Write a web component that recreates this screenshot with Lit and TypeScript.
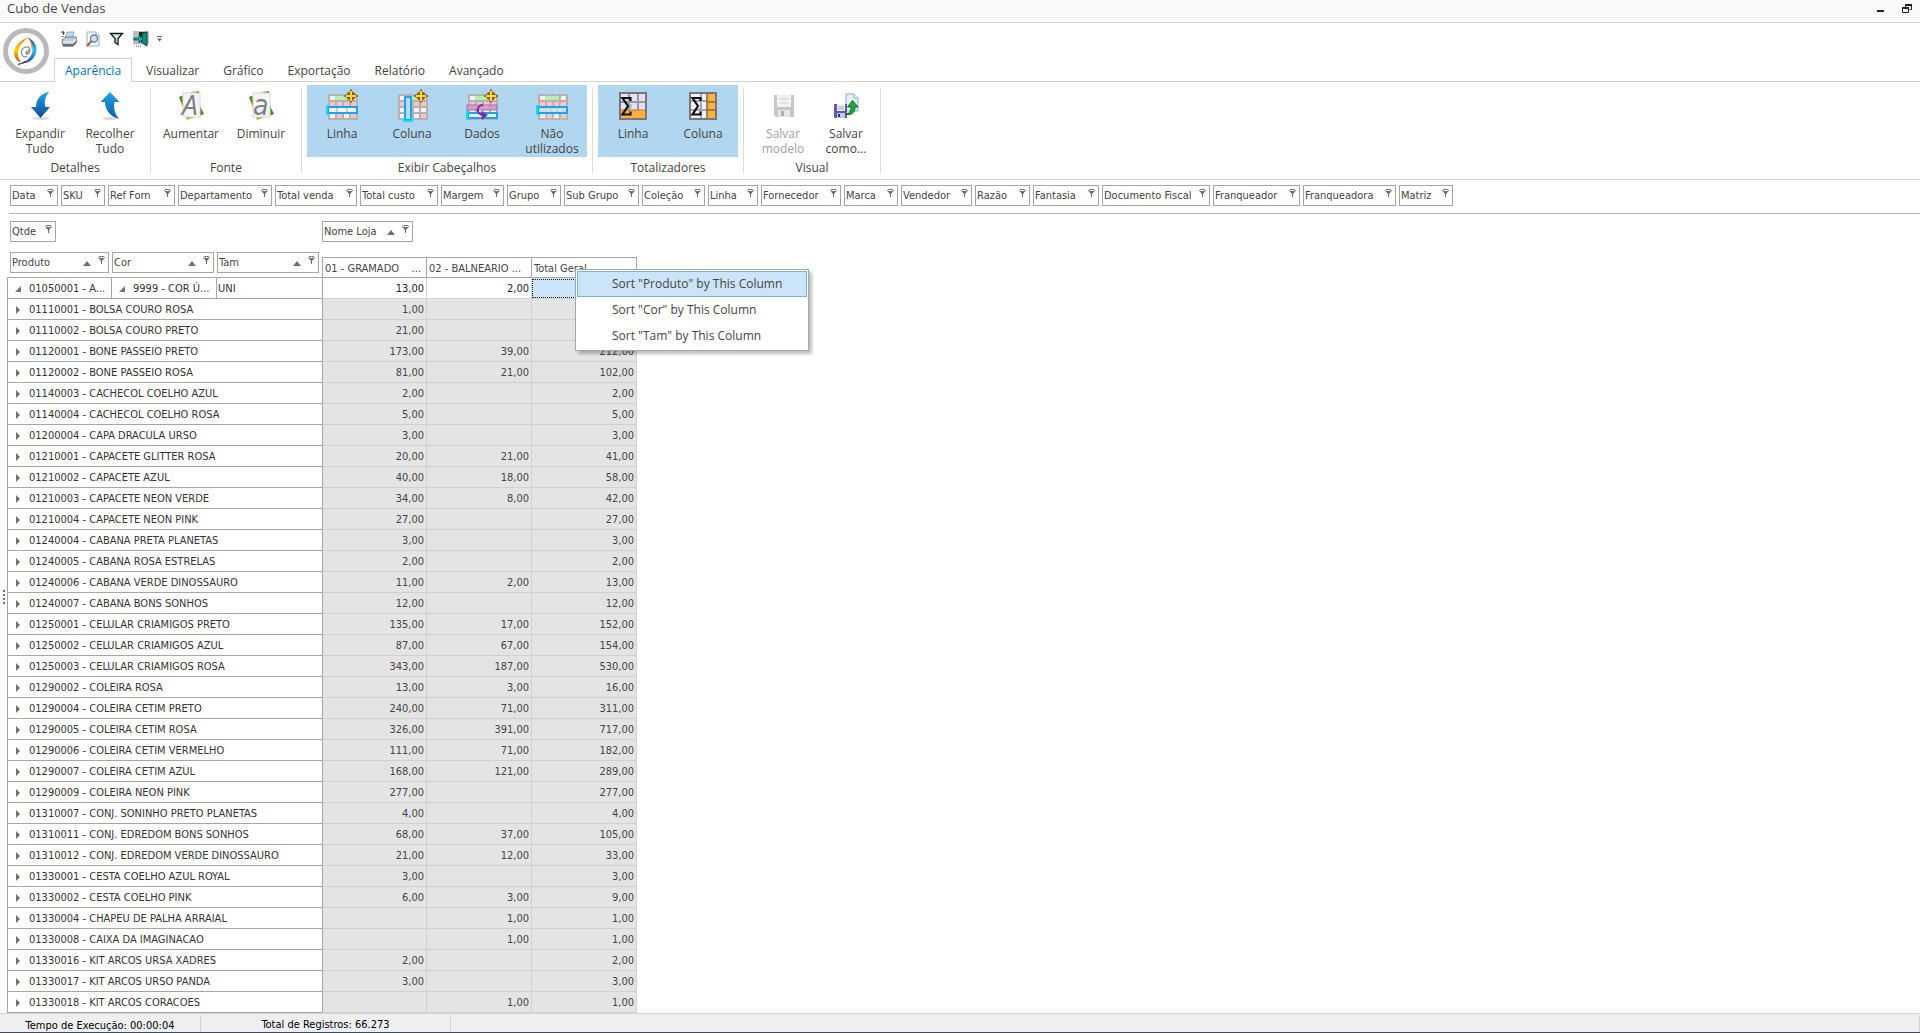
import { LitElement, html, svg, css, nothing, TemplateResult } from "lit";
import { customElement, property } from "lit/decorators.js";
import { classMap } from "lit/directives/class-map.js";

/* ---------- Icons ---------- */

const star = svg`
  <path d="M25 0l2 4 4 2-4 2-2 4-2-4-4-2 4-2z" fill="#ffe24a" stroke="#8a5a10" stroke-width="1.4"/>
  <path d="M21.500 2.500l7 7M28.500 2.500l-7 7" stroke="#8a5a10" stroke-width="1.6"/>
  <path d="M25 1v10M20 6h10" stroke="#ffd83a" stroke-width="2"/>`;

const sheetGrid = (dim = false) => {
  const cells: TemplateResult[] = [];
  const fills = [
    ["#f4f4f4", "#b9ecae", "#b9ecae", "#f4f4f4"],
    ["#ffc2c2", "#ffc2c2", "#ffc2c2", "#ffc2c2"],
    ["#f4f4f4", "#f4f4f4", "#f4f4f4", "#f4f4f4"],
    ["#f4f4f4", "#ffc2c2", "#f4f4f4", "#ffc2c2"],
  ];
  fills.forEach((row, r) =>
    row.forEach((fill, c) => {
      cells.push(svg`<rect x=${4 + c * 7} y=${6 + r * 6} width="5" height="4" fill=${fill}/>` as unknown as TemplateResult);
    })
  );
  return svg`
    <rect x="2" y="4" width="30" height="26" fill=${dim ? "#b9a8b4" : "#b3b3b3"}/>
    ${cells}
    <rect x="9" y="6" width="14" height="4" fill="#b9ecae"/>
    ${dim
      ? svg`<path d="M3 5h28M5 11h26M3 16h28M4 25h28M3 29h28" stroke="#b0d6f0" stroke-width="1" stroke-dasharray="1 2"/>
          <path d="M5 8h26M4 14h28M5 28h26" stroke="#f7f0a8" stroke-width="1" stroke-dasharray="1 3"/>
          <path d="M4 9h26M5 26h26M24 3h3" stroke="#c6e8a0" stroke-width="1" stroke-dasharray="2 2"/>`
      : nothing}`;
};

const sigma = svg`<path d="M13.500 11V8H5.500L11 16 5.500 24.500H13.500V21.500" fill="none" stroke="#111" stroke-width="2.200"/>
  <path d="M13 14l1.500 2-2 3" fill="none" stroke="#5ab4f0" stroke-width="1"/>`;

const icons: Record<string, unknown> = {
  expand: svg`
    <defs><linearGradient id="g" x1="0" y1="0" x2="0" y2="1"><stop offset="0" stop-color="#22a4ee"/><stop offset="1" stop-color="#0a4c92"/></linearGradient></defs>
    <ellipse cx="17" cy="28.500" rx="9" ry="1.500" fill="#d9d9d9"/>
    <path d="M25.500 2C17 3 12 9 12 17H7l9.500 11L26 17h-4.500C20 12 21 6 25.500 2z" fill="url(#g)"/>`,
  collapse: svg`
    <defs><linearGradient id="g" x1="0" y1="0" x2="0" y2="1"><stop offset="0" stop-color="#22a4ee"/><stop offset="1" stop-color="#0a5ca6"/></linearGradient></defs>
    <ellipse cx="17" cy="28.500" rx="9" ry="1.500" fill="#d9d9d9"/>
    <path d="M16 2L6.500 12H11c0 8 6 15.500 14 16.500-4.500-4.500-5.500-10.500-4.500-16.500h5z" fill="url(#g)"/>`,
  bigger: svg`
    <path d="M4 7L20 1 28 24 12 30z" fill="#8cc63c"/><path d="M4 7l3-1 3 14zM24 1l1 8-5-7z" fill="#4c8a1c"/><path d="M25 16l4 8-5 2z" fill="#4c8a1c"/>
    <rect x="8" y="3" width="17" height="24" fill="#f5f5f5" stroke="#d8d8d8"/>
    <text x="7" y="25" font-family="Open Sans, sans-serif" font-size="28" font-style="italic" fill="#808080">A</text>`,
  smaller: svg`
    <path d="M4 7L20 1 28 24 12 30z" fill="#8cc63c"/><path d="M4 7l3-1 3 14zM24 1l1 8-5-7z" fill="#4c8a1c"/><path d="M25 16l4 8-5 2z" fill="#4c8a1c"/>
    <rect x="8" y="3" width="17" height="24" fill="#f5f5f5" stroke="#d8d8d8"/>
    <text x="8" y="25" font-family="DejaVu Sans Condensed, sans-serif" font-size="28" font-style="italic" fill="#808080">a</text>`,
  row: svg`${sheetGrid()}
    <rect x="2" y="17" width="29" height="6" fill="#f2f8fc" stroke="#1ba1f5" stroke-width="2"/>
    <path d="M11 18v4M21 18v4" stroke="#c8d0d8" stroke-width="2"/>
    <path d="M3 16H1v8h2" fill="none" stroke="#10dcff" stroke-width="2"/>${star}`,
  column: svg`${sheetGrid()}
    <rect x="9" y="7" width="6" height="23" fill="#b8dcf4" stroke="#1ba1f5" stroke-width="2"/>
    <path d="M8 28v3h8v-3" fill="none" stroke="#10dcff" stroke-width="2"/>${star}`,
  data: svg`${sheetGrid()}
    <rect x="1" y="15" width="30" height="5" fill="#c9a0cf" stroke="#b06ab8"/>
    <rect x="2" y="23" width="29" height="5" fill="#f2f8fc" stroke="#1ba1f5" stroke-width="2"/>
    <path d="M3 22H1v7h2" fill="none" stroke="#10dcff" stroke-width="2"/>
    <path d="M17 15c-7 0-7 10 0 10" fill="none" stroke="#7e2aa4" stroke-width="2"/>
    <path d="M15 21l7 4-6 5z" fill="#7e2aa4"/>${star}`,
  unused: svg`${sheetGrid(true)}
    <rect x="2" y="17" width="29" height="6" fill="#c4dcec" stroke="#1ba1f5" stroke-width="2"/>
    <path d="M5 20h24" stroke="#f7f4c8" stroke-width="2" stroke-dasharray="2 4"/>
    <path d="M3 16H1v8h2" fill="none" stroke="#10dcff" stroke-width="2"/>`,
  totalRow: svg`
    <rect x="3" y="3" width="26" height="26" fill="#e2e0fa" stroke="#777" stroke-width="2"/>
    <path d="M12 4v16M21 4v16M4 12h24" stroke="#9a9a9a" stroke-width="2"/>
    <rect x="4" y="20" width="24" height="8" fill="#ffae3c"/><path d="M4 20h24" stroke="#c07a20"/>${sigma}`,
  totalColumn: svg`
    <rect x="3" y="3" width="26" height="26" fill="#eef2fa" stroke="#777" stroke-width="2"/>
    <path d="M14 4v24M4 11h16M4 20h16" stroke="#a8a8a8" stroke-width="2"/>
    <rect x="20" y="4" width="8" height="24" fill="#ffb040"/><path d="M20 4v24M20 12h8M20 20h8" stroke="#8a6a3a" stroke-width="1.500"/>${sigma}`,
  save: svg`
    <path d="M7 5h20v22H9l-2-2z" fill="#c6c6c6"/><rect x="10" y="5" width="14" height="12" fill="#f2f2f2"/>
    <path d="M12 9h10M12 13h10" stroke="#cfcfcf"/><rect x="11" y="20" width="12" height="7" fill="#e6e6e6"/><rect x="14" y="21" width="3" height="5" fill="#b0b0b0"/>`,
  saveAs: svg`
    <path d="M16 4h8l4 4v13H16z" fill="#eaf3fd" stroke="#7fa8dc"/><path d="M24 4v4h4" fill="#fff" stroke="#7fa8dc"/>
    <path d="M4 14h13v14H5l-1-1z" fill="#5a58b8"/><rect x="7" y="14" width="8" height="7" fill="#eee"/><path d="M8 17h6M8 19h6" stroke="#aaa"/>
    <rect x="7" y="23" width="8" height="5" fill="#c8c8dc"/><rect x="8" y="24" width="2" height="3" fill="#333478"/>
    <path d="M15 24c5 0 6-3 6-7h-3.500l5-6.500 5.500 6.500h-3c0 6-4 9-10 7z" fill="#22a83a" stroke="#0e6a1e"/>`,
  print: svg`
    <path d="M6 1h7l-2 7H4z" fill="#b8dcfa" stroke="#7a9cc0" stroke-width=".8"/>
    <path d="M1 9l4-3h10l1 5-4 4H2z" fill="#c9ccd2" stroke="#777d88"/><path d="M2 11h11l2-3" stroke="#f4f4f4" fill="none"/>
    <path d="M2 13h10l3-3v3l-3 2.500H2z" fill="#6d727c"/>
    <path d="M0.500 1.500q1.500-1.500 2.500 0 0 1-1.200 2M1.800 5v1" stroke="#222" stroke-width="1.200" fill="none"/>`,
  preview: svg`
    <path d="M2 1h9l3 3v11H2z" fill="#f5faff" stroke="#8cb0dc"/><path d="M11 1v3h3" fill="#fff" stroke="#8cb0dc"/>
    <circle cx="9" cy="7.500" r="3.500" fill="#c8e4f8" stroke="#6a7f98" stroke-width="1.300"/><path d="M6.500 10L2 15" stroke="#a86430" stroke-width="2"/>`,
  funnel: svg`<path d="M1.500 2.500h12l-4.500 5v6l-3-2v-4z" fill="#bff0ec" stroke="#111" stroke-width="1.300"/><path d="M8 7.500v4" stroke="#2aa8a0"/>`,
  exit: svg`
    <rect width="16" height="13" fill="#bdbdbd"/><path d="M6 1h7v10H6z" fill="#222"/><path d="M9 2l5-1v14l-5-3z" fill="#0d8a86" stroke="#032" stroke-width=".8"/>
    <path d="M1 7h5V4l4 4-4 4V9H1z" fill="#12b4a8" stroke="#044" stroke-width=".7"/><path d="M1 14h7M3 15.500h6M12 15h4" stroke="#999" stroke-dasharray="1 1"/>`,
};

const funnel = html`<svg class="funnel" viewBox="0 0 7 8" aria-hidden="true"><ellipse cx="3.500" cy="1.500" rx="3" ry="1.100" fill="#fff" stroke="#666"/><path d="M.5 2L3 5v3h1V5l2.500-3-3 1z" fill="#666"/></svg>`;
const sortUp = html`<svg class="sort" viewBox="0 0 8 5" aria-hidden="true"><path d="M4 0l4 5H0z" fill="#707070"/></svg>`;

const sharedText = css`
  button {
    font: inherit;
    color: inherit;
    border: 0;
    background: none;
    padding: 0;
    margin: 0;
  }
  svg {
    display: block;
    overflow: visible;
  }
`;

/* ---------- Ribbon button ---------- */

@customElement("ribbon-button")
class RibbonButton extends LitElement {
  @property() label = "";
  @property() icon = "";
  @property({ type: Boolean }) disabled = false;
  @property({ type: Boolean, reflect: true }) pressed = false;

  static styles = [
    sharedText,
    css`
      :host {
        display: flex;
        width: 70px;
      }
      :host([pressed]) {
        background: #b0d6f0;
      }
      button {
        flex: 1;
        display: flex;
        flex-direction: column;
        align-items: center;
        padding-top: 5px;
        line-height: 15px;
        white-space: pre-line;
        text-align: center;
      }
      button:disabled {
        color: #a0a0a0;
      }
      svg {
        width: 32px;
        height: 32px;
        margin-bottom: 4px;
      }
    `,
  ];

  render() {
    return html`<button type="button" ?disabled=${this.disabled} aria-pressed=${this.pressed}><svg viewBox="0 0 32 32" aria-hidden="true">${icons[this.icon]}</svg><span>${this.label}</span></button>`;
  }
}

/* ---------- Pivot field chip ---------- */

@customElement("field-chip")
class FieldChip extends LitElement {
  @property() label = "";
  @property({ type: Number }) width = 60;
  @property({ type: Boolean }) sorted = false;

  static styles = [
    sharedText,
    css`
      :host {
        display: block;
      }
      button {
        box-sizing: border-box;
        display: flex;
        align-items: flex-start;
        height: 21px;
        padding: 0 3px 0 1px;
        border: 1px solid #a6a6a6;
        background: #fff;
        line-height: 19px;
        text-align: left;
      }
      .name {
        flex: 1;
        white-space: nowrap;
      }
      .funnel {
        width: 7px;
        height: 8px;
        margin-top: 3px;
      }
      .sort {
        width: 8px;
        height: 5px;
        margin: 8px 7px 0 0;
      }
    `,
  ];

  render() {
    return html`<button type="button" style="width:${this.width}px"><span class="name">${this.label}</span>${this.sorted ? sortUp : nothing}${funnel}</button>`;
  }
}

/* ---------- Data ---------- */

interface RibbonItem {
  label: string;
  icon: string;
  pressed?: boolean;
  disabled?: boolean;
}

const groups: { title: string; compact?: boolean; items: RibbonItem[] }[] = [
  { title: "Detalhes", items: [{ label: "Expandir\nTudo", icon: "expand" }, { label: "Recolher\nTudo", icon: "collapse" }] },
  { title: "Fonte", items: [{ label: "Aumentar", icon: "bigger" }, { label: "Diminuir", icon: "smaller" }] },
  {
    title: "Exibir Cabeçalhos",
    items: [
      { label: "Linha", icon: "row", pressed: true },
      { label: "Coluna", icon: "column", pressed: true },
      { label: "Dados", icon: "data", pressed: true },
      { label: "Não\nutilizados", icon: "unused", pressed: true },
    ],
  },
  {
    title: "Totalizadores",
    items: [
      { label: "Linha", icon: "totalRow", pressed: true },
      { label: "Coluna", icon: "totalColumn", pressed: true },
    ],
  },
  {
    title: "Visual",
    compact: true,
    items: [
      { label: "Salvar\nmodelo", icon: "save", disabled: true },
      { label: "Salvar\ncomo...", icon: "saveAs" },
    ],
  },
];

const tabs = ["Aparência", "Visualizar", "Gráfico", "Exportação", "Relatório", "Avançado"];

const filters: [string, number][] = [
  ["Data", 48], ["SKU", 44], ["Ref Forn", 67], ["Departamento", 94], ["Total venda", 82], ["Total custo", 78],
  ["Margem", 63], ["Grupo", 54], ["Sub Grupo", 75], ["Coleção", 63], ["Linha", 50], ["Fornecedor", 80],
  ["Marca", 54], ["Vendedor", 71], ["Razão", 55], ["Fantasia", 66], ["Documento Fiscal", 108], ["Franqueador", 87],
  ["Franqueadora", 93], ["Matriz", 54],
];

const rows: [string, string, string, string][] = [
  ["01110001 - BOLSA COURO ROSA", "1,00", "", "1,00"],
  ["01110002 - BOLSA COURO PRETO", "21,00", "", "21,00"],
  ["01120001 - BONE PASSEIO PRETO", "173,00", "39,00", "212,00"],
  ["01120002 - BONE PASSEIO ROSA", "81,00", "21,00", "102,00"],
  ["01140003 - CACHECOL COELHO AZUL", "2,00", "", "2,00"],
  ["01140004 - CACHECOL COELHO ROSA", "5,00", "", "5,00"],
  ["01200004 - CAPA DRACULA URSO", "3,00", "", "3,00"],
  ["01210001 - CAPACETE GLITTER ROSA", "20,00", "21,00", "41,00"],
  ["01210002 - CAPACETE AZUL", "40,00", "18,00", "58,00"],
  ["01210003 - CAPACETE NEON VERDE", "34,00", "8,00", "42,00"],
  ["01210004 - CAPACETE NEON PINK", "27,00", "", "27,00"],
  ["01240004 - CABANA PRETA PLANETAS", "3,00", "", "3,00"],
  ["01240005 - CABANA ROSA ESTRELAS", "2,00", "", "2,00"],
  ["01240006 - CABANA VERDE DINOSSAURO", "11,00", "2,00", "13,00"],
  ["01240007 - CABANA BONS SONHOS", "12,00", "", "12,00"],
  ["01250001 - CELULAR CRIAMIGOS PRETO", "135,00", "17,00", "152,00"],
  ["01250002 - CELULAR CRIAMIGOS AZUL", "87,00", "67,00", "154,00"],
  ["01250003 - CELULAR CRIAMIGOS ROSA", "343,00", "187,00", "530,00"],
  ["01290002 - COLEIRA ROSA", "13,00", "3,00", "16,00"],
  ["01290004 - COLEIRA CETIM PRETO", "240,00", "71,00", "311,00"],
  ["01290005 - COLEIRA CETIM ROSA", "326,00", "391,00", "717,00"],
  ["01290006 - COLEIRA CETIM VERMELHO", "111,00", "71,00", "182,00"],
  ["01290007 - COLEIRA CETIM AZUL", "168,00", "121,00", "289,00"],
  ["01290009 - COLEIRA NEON PINK", "277,00", "", "277,00"],
  ["01310007 - CONJ. SONINHO PRETO PLANETAS", "4,00", "", "4,00"],
  ["01310011 - CONJ. EDREDOM BONS SONHOS", "68,00", "37,00", "105,00"],
  ["01310012 - CONJ. EDREDOM VERDE DINOSSAURO", "21,00", "12,00", "33,00"],
  ["01330001 - CESTA COELHO AZUL ROYAL", "3,00", "", "3,00"],
  ["01330002 - CESTA COELHO PINK", "6,00", "3,00", "9,00"],
  ["01330004 - CHAPEU DE PALHA ARRAIAL", "", "1,00", "1,00"],
  ["01330008 - CAIXA DA IMAGINACAO", "", "1,00", "1,00"],
  ["01330016 - KIT ARCOS URSA XADRES", "2,00", "", "2,00"],
  ["01330017 - KIT ARCOS URSO PANDA", "3,00", "", "3,00"],
  ["01330018 - KIT ARCOS CORACOES", "", "1,00", "1,00"],
];

const sortOptions = ["Produto", "Cor", "Tam"];

const opened = html`<button type="button" class="toggle" aria-label="Recolher"><svg width="6" height="6" viewBox="0 0 6 6"><path d="M6 0v6H0z" fill="#707070"/></svg></button>`;
const closed = html`<button type="button" class="toggle" aria-label="Expandir"><svg width="6" height="8" viewBox="0 0 6 8"><path d="M1 0l4 4-4 4z" fill="#707070"/></svg></button>`;

/* ---------- Application ---------- */

@customElement("app-root")
class AppRoot extends LitElement {
  static styles = [
    sharedText,
    css`
      :host {
        display: flex;
        flex-direction: column;
        min-height: 100vh;
        box-sizing: border-box;
        border-bottom: 1px solid #3b4a6b;
        background: #fff;
        color: #444;
        font: 12px/15px "Open Sans", "Noto Sans", sans-serif;
      }

      .titlebar {
        display: flex;
        justify-content: space-between;
        height: 22px;
        padding: 0 8px 0 7px;
        border-bottom: 1px solid #d2d2d2;
        background: #fafafa;
        font-size: 13px;
        line-height: 17px;
      }
      .window-buttons {
        display: flex;
        gap: 18px;
        padding-top: 4px;
        align-items: flex-start;
      }

      .header {
        display: grid;
        grid-template-columns: 54px 1fr;
        height: 58px;
        border-bottom: 1px solid #d2d2d2;
      }
      .logo {
        grid-row: span 2;
        width: 46px;
        height: 46px;
        margin: 5px 0 0 3px;
      }
      .quick {
        display: flex;
        align-items: center;
        height: 31px;
        padding-left: 7px;
        gap: 8px;
      }
      .quick svg {
        width: 16px;
        height: 16px;
      }
      .quick .more svg {
        width: 5px;
        height: 6px;
      }
      .tabs {
        display: flex;
        height: 24px;
        margin-top: 4px;
      }
      .tab {
        box-sizing: border-box;
        height: 24px;
        padding: 0 11px;
        border: 1px solid transparent;
        border-bottom: 0;
        line-height: 24px;
      }
      .tab.active {
        border-color: #d2d2d2;
        background: #fff;
        color: #0072c6;
        padding: 0 10px;
        margin-right: 2px;
      }

      .ribbon {
        display: flex;
        height: 97px;
        border-bottom: 1px solid #d2d2d2;
      }
      .group {
        display: flex;
        flex-direction: column;
        align-items: center;
        padding: 3px 6px 0 5px;
        position: relative;
      }
      .group::after {
        content: "";
        position: absolute;
        top: 6px;
        right: 0;
        height: 85px;
        border-right: 1px solid #dcdcdc;
      }
      .buttons {
        display: flex;
        height: 72px;
      }
      .compact ribbon-button {
        width: 68px;
      }
      .compact ribbon-button:last-child {
        width: 58px;
      }
      .group-title {
        line-height: 22px;
      }

      .workspace {
        flex: 1;
        display: flex;
        font: 11px/19px "DejaVu Sans Condensed", "DejaVu Sans", sans-serif;
      }
      .splitter {
        width: 7px;
        display: flex;
        flex-direction: column;
        justify-content: center;
        align-items: center;
        gap: 2px;
      }
      .splitter i {
        width: 2px;
        height: 2px;
        background: #707070;
      }
      .pivot {
        flex: 1;
      }
      .filters {
        display: flex;
        gap: 3px;
        margin-left: 2px;
        padding: 5px 0 7px 1px;
        border-bottom: 1px solid #b4b4b4;
      }
      .grid {
        position: relative;
      }

      table {
        border-collapse: separate;
        border-spacing: 0;
        table-layout: fixed;
        width: 630px;
      }
      th,
      td {
        padding: 0;
        font-weight: normal;
        text-align: left;
        white-space: nowrap;
      }
      .areas th {
        height: 34px;
        vertical-align: top;
      }
      .areas field-chip {
        margin-top: 7px;
      }
      .areas .data-area {
        padding-left: 3px;
      }
      .fields th {
        height: 30px;
        vertical-align: bottom;
      }
      .fields .row-fields {
        border-bottom: 1px solid #a6a6a6;
        height: 29px;
      }
      .chips {
        display: flex;
        gap: 3px;
        padding: 4px 0 4px 3px;
      }
      .caption {
        height: 19px;
        padding-left: 2px;
        border: 1px solid #a6a6a6;
        border-right: 0;
        line-height: 21px;
        white-space: pre;
      }
      th:last-child .caption {
        border-right: 1px solid #a6a6a6;
      }

      tbody th {
        height: 20px;
        border-left: 1px solid #a6a6a6;
        border-bottom: 1px solid #a6a6a6;
        color: #333;
      }
      .cell {
        box-sizing: border-box;
        display: flex;
        align-items: center;
        height: 20px;
        padding-top: 1px;
      }
      .toggle {
        width: 21px;
        padding-left: 7px;
      }
      .plain {
        padding-left: 1px;
      }
      td {
        height: 18px;
        padding: 2px 2px 0 0;
        line-height: 18px;
        text-align: right;
        background: #e4e4e4;
        border-left: 1px solid #d0d0d0;
        border-bottom: 1px solid #d0d0d0;
        color: #444;
      }
      td:last-child {
        border-right: 1px solid #d0d0d0;
      }
      th + td {
        border-left-color: #a6a6a6;
      }
      .leaf td {
        background: #fff;
        color: #222;
      }
      .leaf td.selected {
        background: #cce4f7;
        outline: 1px dotted #222;
        outline-offset: -2px;
      }

      .menu {
        position: absolute;
        top: 55px;
        left: 568px;
        width: 230px;
        margin: 0;
        padding: 1px;
        border: 1px solid #a6a6a6;
        background: #fff;
        box-shadow: 3px 3px 3px rgba(0, 0, 0, 0.25);
        font: 12px/24px "Open Sans", "Noto Sans", sans-serif;
      }
      .menu button {
        display: block;
        width: 100%;
        padding-left: 34px;
        border: 1px solid transparent;
        text-align: left;
        white-space: nowrap;
      }
      .menu .hot {
        background: #cce4f7;
        border-color: #7ab2e8;
      }

      .status {
        display: flex;
        height: 18px;
        border-top: 1px solid #d4d4d4;
        background: #efefef;
        color: #000;
        font: 11px/21px "DejaVu Sans Condensed", "DejaVu Sans", sans-serif;
      }
      .status span {
        box-sizing: border-box;
        margin-top: 1px;
        text-align: center;
        border-right: 1px solid #d4d4d4;
      }
      .status .time {
        width: 201px;
      }
      .status .count {
        width: 250px;
        line-height: 19px;
      }
      .status .rest {
        flex: 1;
      }
    `,
  ];

  private quickButton(icon: string, label: string) {
    return html`<button type="button" aria-label=${label}><svg viewBox="0 0 16 16">${icons[icon]}</svg></button>`;
  }

  private logo() {
    return html`<svg class="logo" viewBox="0 0 46 46" role="img" aria-label="Menu">
      <defs>
        <linearGradient id="warm" x1="0" y1="0" x2="0" y2="1"><stop offset="0" stop-color="#f0761c"/><stop offset=".5" stop-color="#ffd800"/><stop offset="1" stop-color="#e03a1c"/></linearGradient>
        <linearGradient id="cool" x1="0" y1="0" x2="0" y2="1"><stop offset="0" stop-color="#1d3fa8"/><stop offset=".5" stop-color="#25c8f5"/><stop offset="1" stop-color="#2c2a90"/></linearGradient>
      </defs>
      <circle cx="23" cy="23" r="20.500" fill="#fff" stroke="#b9b9b9" stroke-width="5"/>
      <path d="M25 9.500C17 12 9 20 11.500 28c1 3 3 5.500 6.500 6C12 27 15 17 25 9.500z" fill="url(#warm)"/>
      <path d="M25 9.500c6 3 10 9 8 15.500-2 7-8 10.500-17 11 7-2 11-5 13-11 1.500-6 0-11-4-15.500z" fill="url(#cool)"/>
      <path d="M24 23c-2 1-1 4 1 3s3-5 1-6.500-8 0-7.500 5 3.500 5 5.500 3.500M26 21l-2 5" fill="none" stroke="#8c8c8c" stroke-width="1.200"/>
      <path d="M25 9.500c3 4 4 7 4 11" fill="none" stroke="#f07a30" stroke-width="1"/>
      <path d="M23 33c-3 2-5 3-8 3.500" fill="none" stroke="#5a3a9a" stroke-width="1.500"/>
    </svg>`;
  }

  render() {
    return html`
      <header class="titlebar">
        <span>Cubo de Vendas</span>
        <div class="window-buttons">
          <button type="button" aria-label="Minimizar"><svg width="7" height="9" viewBox="0 0 7 9"><rect y="6" width="7" height="2" fill="#222"/></svg></button>
          <button type="button" aria-label="Restaurar"><svg width="10" height="9" viewBox="0 0 10 9"><path d="M3.500 3V1h6v4.500h-2" fill="none" stroke="#222"/><path d="M3 0h7v2H3zM0 3h7v2H0z" fill="#222"/><path d="M.5 4v4.500h6V4" fill="none" stroke="#222"/></svg></button>
        </div>
      </header>

      <div class="header">
        ${this.logo()}
        <div class="quick">
          ${this.quickButton("print", "Imprimir")}${this.quickButton("preview", "Pré-visualizar")}${this.quickButton("funnel", "Filtro")}${this.quickButton("exit", "Sair")}
          <button type="button" class="more" aria-label="Mais"><svg viewBox="0 0 5 6"><path d="M0 .5h5" stroke="#666"/><path d="M0 2.500h5L2.500 5.500z" fill="#666"/></svg></button>
        </div>
        <nav class="tabs" role="tablist">
          ${tabs.map((t, i) => html`<button type="button" role="tab" aria-selected=${i === 0} class=${classMap({ tab: true, active: i === 0 })}>${t}</button>`)}
        </nav>
      </div>

      <div class="ribbon">
        ${groups.map(
          (g) => html`<section class=${classMap({ group: true, compact: !!g.compact })}>
            <div class="buttons">
              ${g.items.map((b) => html`<ribbon-button .label=${b.label} .icon=${b.icon} ?pressed=${!!b.pressed} ?disabled=${!!b.disabled}></ribbon-button>`)}
            </div>
            <span class="group-title">${g.title}</span>
          </section>`
        )}
      </div>

      <main class="workspace">
        <div class="splitter"><i></i><i></i><i></i><i></i></div>
        <div class="pivot">
          <div class="filters">${filters.map(([label, width]) => html`<field-chip .label=${label} .width=${width}></field-chip>`)}</div>
          <div class="grid">
            <table>
              <colgroup>
                ${[104, 105, 106, 104, 105, 106].map((w) => html`<col style="width:${w}px" />`)}
              </colgroup>
              <thead>
                <tr class="areas">
                  <th colspan="3" class="data-area"><field-chip .label=${"Qtde"} .width=${46}></field-chip></th>
                  <th colspan="3"><field-chip .label=${"Nome Loja"} .width=${91} sorted></field-chip></th>
                </tr>
                <tr class="fields">
                  <th colspan="3" class="row-fields">
                    <div class="chips"><field-chip .label=${"Produto"} .width=${99} sorted></field-chip><field-chip .label=${"Cor"} .width=${102} sorted></field-chip><field-chip .label=${"Tam"} .width=${102} sorted></field-chip></div>
                  </th>
                  <th><div class="caption">01 - GRAMADO    ...</div></th>
                  <th><div class="caption">02 - BALNEARIO ...</div></th>
                  <th><div class="caption">Total Geral</div></th>
                </tr>
              </thead>
              <tbody>
                <tr class="leaf">
                  <th><div class="cell">${opened}01050001 - A...</div></th>
                  <th><div class="cell">${opened}9999 - COR Ú...</div></th>
                  <th><div class="cell plain">UNI</div></th>
                  <td>13,00</td>
                  <td>2,00</td>
                  <td class="selected"></td>
                </tr>
                ${rows.map(
                  ([name, a, b, total]) => html`<tr>
                    <th colspan="3"><div class="cell">${closed}${name}</div></th>
                    <td>${a}</td>
                    <td>${b}</td>
                    <td>${total}</td>
                  </tr>`
                )}
              </tbody>
            </table>
            <div class="menu" role="menu">
              ${sortOptions.map((s, i) => html`<button type="button" role="menuitem" class=${classMap({ hot: i === 0 })}>Sort "${s}" by This Column</button>`)}
            </div>
          </div>
        </div>
      </main>

      <footer class="status">
        <span class="time">Tempo de Execução: 00:00:04</span>
        <span class="count">Total de Registros: 66.273</span>
        <span class="rest"></span>
      </footer>
    `;
  }
}
